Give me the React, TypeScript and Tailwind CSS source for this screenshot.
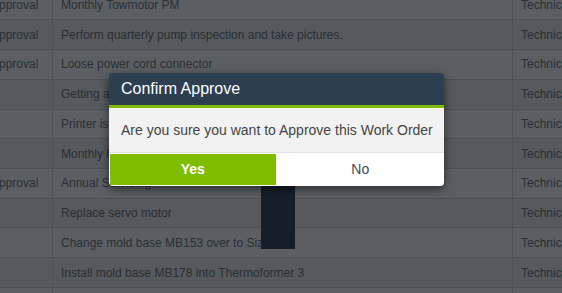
const rows: { status: string; title: string }[] = [
  { status: "Approval", title: "Monthly Towmotor PM" },
  { status: "Approval", title: "Perform quarterly pump inspection and take pictures." },
  { status: "Approval", title: "Loose power cord connector" },
  { status: "", title: "Getting an error on the display" },
  { status: "", title: "Printer is jammed again" },
  { status: "", title: "Monthly PM" },
  { status: "Approval", title: "Annual Servicing" },
  { status: "", title: "Replace servo motor" },
  { status: "", title: "Change mold base MB153 over to Sizer" },
  { status: "", title: "Install mold base MB178 into Thermoformer 3" },
  { status: "", title: "" },
];

export default function App() {
  return (
    <div
      className="relative w-[562px] h-[293px] overflow-hidden bg-[#5a5e62]"
      style={{ fontFamily: '"Liberation Sans", Arial, sans-serif' }}
    >
      {/* dimmed work order table */}
      <div className="-mt-[9.4px] -ml-[17px] flex flex-col">
        {rows.map((r, i) => (
          <div
            key={i}
            className={`flex h-[29.74px] border-b border-[#4d5155] text-[12px] text-[#2b2f34] ${
              i % 2 === 0 ? "bg-[#5b5f63]" : "bg-[#56595d]"
            }`}
          >
            <div className="w-[70px] shrink-0 flex items-center pl-[8px] whitespace-nowrap border-r border-[#4d5155]">
              {r.status}
            </div>
            <div className="w-[460px] shrink-0 flex items-center pl-[8px] whitespace-nowrap border-r border-[#4d5155]">
              {r.title}
            </div>
            <div className="flex-1 flex items-center pl-[8px] whitespace-nowrap">Technician</div>
          </div>
        ))}
      </div>

      {/* dark element behind the dialog */}
      <div className="absolute left-[261px] top-[185px] w-[34px] h-[64px] bg-[#161e28]" />

      {/* confirm dialog */}
      <div className="absolute left-[109px] top-[73px] w-[335px] rounded-[4px] overflow-hidden shadow-[0_3px_10px_rgba(0,0,0,0.55)]">
        <div className="h-[35px] bg-[#2c3e50] border-b-[3px] border-[#80bd01] flex items-center pl-[12px] pb-[1px]">
          <span className="text-[16px] text-white">Confirm Approve</span>
        </div>
        <div className="h-[45px] bg-[#f2f2f2] flex items-center pl-[12px] border-b border-[#e2e2e2]">
          <span className="text-[14px] text-[#444]">Are you sure you want to Approve this Work Order</span>
        </div>
        <div className="bg-white p-[1px] flex gap-[2px]">
          <button className="flex-1 h-[31px] bg-[#80bd01] text-white text-[14px] font-bold">Yes</button>
          <button className="flex-1 h-[31px] bg-white text-[#3d4b5a] text-[14px]">No</button>
        </div>
      </div>
    </div>
  );
}
